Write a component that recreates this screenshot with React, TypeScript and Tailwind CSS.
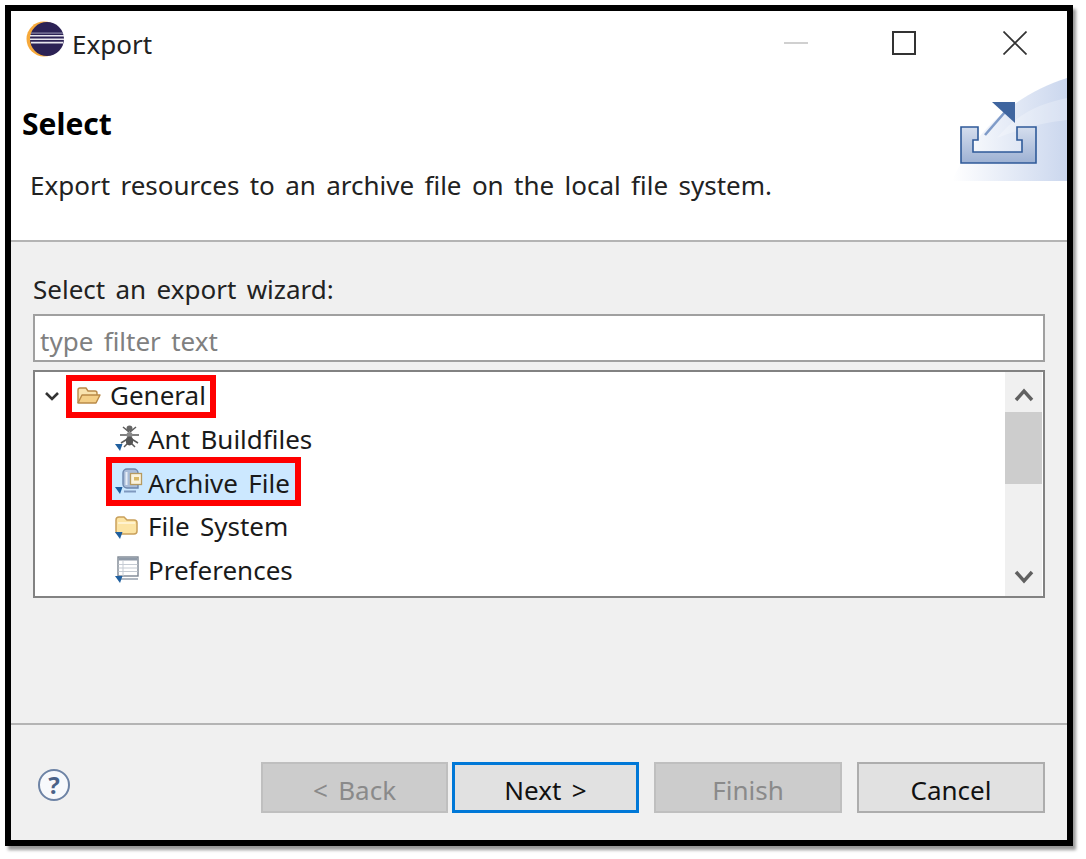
import React from "react";

const font = "[font-family:'Noto_Sans','Open_Sans',sans-serif]";

function Eclipse() {
  return (
    <svg width="40" height="38" viewBox="0 0 40 38" className="shrink-0">
      <circle cx="18" cy="19" r="17.5" fill="#f6a93b" />
      <circle cx="21" cy="19" r="17" fill="#2c2255" />
      <path d="M4 15h34v1.6H4zM4 18.4h34V20H4zM5 21.8h32v1.6H5z" fill="#e8e6ee" />
      <path d="M5 12.5h32v1.2H5z" fill="#8d88aa" />
    </svg>
  );
}

function ExportBanner() {
  return (
    <svg width="115" height="103" viewBox="0 0 115 103" className="block">
      <defs>
        <linearGradient id="bg" x1="0" y1="0" x2="1" y2="0">
          <stop offset="0" stopColor="#ffffff" />
          <stop offset="1" stopColor="#cbd7ee" />
        </linearGradient>
        <linearGradient id="tray" x1="0" y1="0" x2="0" y2="1">
          <stop offset="0" stopColor="#d5deee" />
          <stop offset="1" stopColor="#9db1d3" />
        </linearGradient>
      </defs>
      <path d="M0 103C20 55 65 15 115 0V103Z" fill="url(#bg)" />
      <path d="M45 60C65 35 90 25 115 20V42C90 45 70 50 45 60Z" fill="#ffffff" opacity="0.25" />
      <path
        d="M9 49H26V62H21V74H70V62H65V49H84V85H9Z"
        fill="url(#tray)"
        stroke="#2f5a99"
        strokeWidth="1.6"
      />
      <path d="M33 57L53 34" stroke="#7f9bc8" strokeWidth="2.6" fill="none" />
      <path d="M40 24H63V45Z" fill="#3f659f" />
    </svg>
  );
}

function Overlay() {
  return (
    <svg width="8" height="8" viewBox="0 0 8 8" className="absolute left-0 bottom-[1px]">
      <path d="M0 1H7.5L5 8Z" fill="#1f5f9f" />
    </svg>
  );
}

function AntIcon() {
  return (
    <div className="relative w-[30px] h-[28px] mb-[4px]">
      <Overlay />
      <svg width="30" height="28" viewBox="0 0 30 28" className="block">
        <g stroke="#5a5a5a" strokeWidth="1.5" fill="none">
          <path d="M8 3l6 5M21 3l-6 5M5 11h9M24 11h-9M6 19l8-5M23 19l-8-5M9 23l5-5M20 23l-5-5" />
        </g>
        <circle cx="14.5" cy="4.5" r="3" fill="#666" />
        <ellipse cx="14.5" cy="11" rx="3" ry="3" fill="#888" />
        <ellipse cx="14.5" cy="17" rx="3.6" ry="4.4" fill="#555" />
      </svg>
    </div>
  );
}

function ArchiveIcon() {
  return (
    <div className="relative w-[30px] h-[28px]">
      <Overlay />
      <svg width="30" height="28" viewBox="0 0 30 28" className="block">
        <path d="M8 6a4 4 0 014-4h7a4 4 0 014 4v15H12a4 4 0 01-4-4z" fill="#a9bcd8" stroke="#6c86ad" strokeWidth="1.4" />
        <path d="M11.5 5v13" stroke="#e8eef7" strokeWidth="2" />
        <path d="M9 24.5h12" stroke="#7f99bf" strokeWidth="2" />
        <rect x="15.5" y="6.5" width="11" height="11" fill="#fbf3dc" stroke="#b69a5f" strokeWidth="1.3" />
        <rect x="19" y="10" width="5" height="3.5" fill="#d9b865" />
      </svg>
    </div>
  );
}

function FolderIcon() {
  return (
    <div className="relative w-[30px] h-[28px] mb-[4px]">
      <svg width="30" height="28" viewBox="0 0 30 28" className="block">
        <g transform="translate(0 2)">
          <path d="M1 6a3 3 0 013-3h5l3 3h7a3 3 0 013 3v8a3 3 0 01-3 3H4a3 3 0 01-3-3z" fill="#fce4a4" stroke="#c9a05b" strokeWidth="1.5" />
          <path d="M3 9h17" stroke="#fff6da" strokeWidth="1.6" />
        </g>
      </svg>
      <Overlay />
    </div>
  );
}

function PrefIcon() {
  return (
    <div className="relative w-[30px] h-[28px] mb-[4px]">
      <Overlay />
      <svg width="30" height="28" viewBox="0 0 30 28" className="block">
        <rect x="3" y="1" width="20" height="19" fill="#ffffff" stroke="#7d8793" strokeWidth="1.4" />
        <rect x="3.5" y="1.5" width="19" height="3" fill="#8f9aa8" />
        <path d="M8 5v15M3.5 8.5h19M3.5 12h19M3.5 15.5h19" stroke="#c5cbd3" strokeWidth="1" />
        <path d="M5 23h18" stroke="#8f9aa8" strokeWidth="1.4" />
      </svg>
    </div>
  );
}

function OpenFolder() {
  return (
    <svg width="26" height="24" viewBox="0 0 26 24" className="block">
      <path d="M2 19V6a2 2 0 012-2h6l2 3h7a2 2 0 012 2v2" fill="#f9e3ae" stroke="#b98a48" strokeWidth="1.4" />
      <path d="M2 19l4-8h18l-4 8z" fill="#f4cf87" stroke="#b98a48" strokeWidth="1.4" strokeLinejoin="round" />
    </svg>
  );
}

function Btn({ label, kind, width }: { label: string; kind: "disabled" | "default" | "normal"; width: string }) {
  const cls =
    kind === "disabled"
      ? "bg-[#cccccc] border-2 border-[#bfbfbf] text-[#8a8a8a]"
      : kind === "default"
      ? "bg-[#e1e1e1] border-[3px] border-[#0078d7] text-[#111]"
      : "bg-[#e1e1e1] border-2 border-[#adadad] text-[#111]";
  return (
    <div className={`${width} h-[51px] flex items-center justify-center text-[26px] leading-none pt-[5px] ${cls}`}>
      {label}
    </div>
  );
}

export default function App() {
  return (
    <div className={`w-[1086px] h-[859px] bg-white pt-[5px] pl-[5px] overflow-hidden ${font} text-[#1a1a1a] [word-spacing:3.6px]`}>
      <div className="w-[1068px] h-[841px] border-[6px] border-black flex flex-col shadow-[3px_4px_3px_rgba(0,0,0,0.4)] bg-white">
        {/* Title bar */}
        <div className="h-[67px] shrink-0 flex items-start pl-[15px] pr-[40px] bg-white">
          <div className="flex items-center gap-[6px] mt-[9px]">
            <Eclipse />
            <span className="text-[26px] leading-none text-[#222] mt-[10px]">Export</span>
          </div>
          <div className="ml-auto flex items-center mt-[20px]">
            <div className="w-[24px] h-[2px] bg-[#d0d0d0]" />
            <div className="w-[24px] h-[24px] border-2 border-[#333] ml-[84px]" />
            <svg width="24" height="24" viewBox="0 0 24 24" className="ml-[87px]">
              <path d="M0.5 0.5L23.5 23.5M23.5 0.5L0.5 23.5" stroke="#333" strokeWidth="1.7" />
            </svg>
          </div>
        </div>
        {/* Header */}
        <div className="h-[162px] shrink-0 bg-white relative pl-[11px]">
          <div className="text-[30px] font-bold leading-none text-black pt-[31px]">Select</div>
          <div className="text-[26px] leading-none pl-[8px] pt-[33px] text-[#222]">
            Export resources to an archive file on the local file system.
          </div>
          <div className="absolute right-0 top-0">
            <ExportBanner />
          </div>
        </div>
        <div className="h-[2px] shrink-0 bg-[#b4b4b4]" />
        {/* Body */}
        <div className="flex-1 bg-[#f0f0f0] px-[22px] flex flex-col">
          <div className="text-[26px] leading-none pt-[34px] text-[#222]">Select an export wizard:</div>
          <div className="mt-[12px] h-[48px] border-2 border-[#a0a0a0] bg-white flex items-center pl-[5px] pt-[6px] text-[26px] leading-none text-[#808080]">
            type filter text
          </div>
          <div className="mt-[8px] h-[228px] border-2 border-[#828282] bg-white flex">
            <div className="flex-1 pt-[2px] relative">
              <div className="h-[44px] flex items-center">
                <svg width="16" height="10" viewBox="0 0 16 10" className="ml-[9px]">
                  <path d="M2 2L8 8L14 2" fill="none" stroke="#333" strokeWidth="2.6" />
                </svg>
                <div className="ml-[6px] w-[150px] h-[43px] border-[6px] border-[#ff0000] flex items-center pl-[4px] gap-[8px]">
                  <OpenFolder />
                  <span className="text-[26px] leading-none mb-[2px]">General</span>
                </div>
              </div>
              <div className="h-[44px] flex items-center pl-[80px] gap-[3px]">
                <AntIcon />
                <span className="text-[26px] leading-none mb-[2px]">Ant Buildfiles</span>
              </div>
              <div className="h-[44px] flex items-center pl-[71px]">
                <div className="w-[195px] h-[49px] -mt-[5px] border-[6px] border-[#ff0000] bg-[#cce8ff] flex items-center gap-[3px]">
                  <div className="ml-[3px] -mt-[2px]"><ArchiveIcon /></div>
                  <span className="text-[26px] leading-none mt-[3px] whitespace-nowrap">Archive File</span>
                </div>
              </div>
              <div className="h-[44px] flex items-center pl-[80px] gap-[3px]">
                <FolderIcon />
                <span className="text-[26px] leading-none mb-[5px]">File System</span>
              </div>
              <div className="h-[44px] flex items-center pl-[80px] gap-[3px]">
                <PrefIcon />
                <span className="text-[26px] leading-none mb-[5px]">Preferences</span>
              </div>
            </div>
            <div className="w-[37px] bg-[#f0f0f0] flex flex-col mr-[1px]">
              <div className="h-[40px] flex items-center justify-center pt-[6px]">
                <svg width="20" height="14" viewBox="0 0 20 14"><path d="M2 12L10 3L18 12" fill="none" stroke="#606060" strokeWidth="3.4" /></svg>
              </div>
              <div className="h-[72px] bg-[#cdcdcd]" />
              <div className="flex-1 flex items-end justify-center pb-[12px]">
                <svg width="20" height="14" viewBox="0 0 20 14"><path d="M2 2L10 11L18 2" fill="none" stroke="#606060" strokeWidth="3.4" /></svg>
              </div>
            </div>
          </div>
        </div>
        <div className="h-[2px] shrink-0 bg-[#b4b4b4]" />
        {/* Footer */}
        <div className="h-[115px] shrink-0 bg-[#f0f0f0] flex items-start pl-[27px] pr-[22px]">
          <div className="mt-[44px] w-[32px] h-[32px] rounded-full border-2 border-[#6d83a5] bg-[#f7f9fc] flex items-center justify-center text-[24px] font-bold leading-none text-[#4a6288]">
            ?
          </div>
          <div className="ml-auto mt-[37px] flex">
            <Btn label="< Back" kind="disabled" width="w-[187px]" />
            <div className="ml-[4px]"><Btn label="Next >" kind="default" width="w-[187px]" /></div>
            <div className="ml-[15px]"><Btn label="Finish" kind="disabled" width="w-[188px]" /></div>
            <div className="ml-[15px]"><Btn label="Cancel" kind="normal" width="w-[188px]" /></div>
          </div>
        </div>
      </div>
    </div>
  );
}
